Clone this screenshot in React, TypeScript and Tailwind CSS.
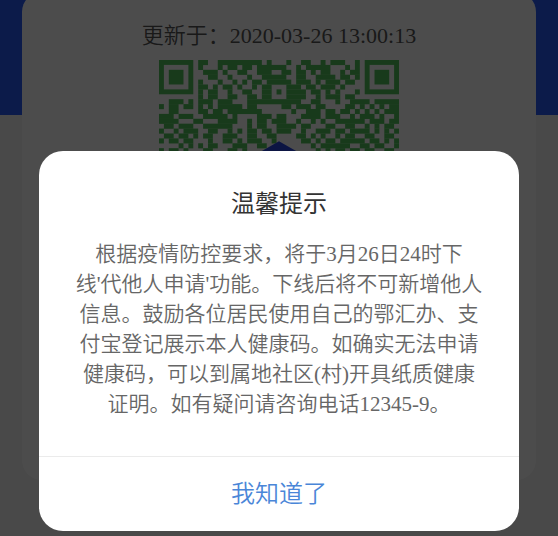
const TOP_ROWS = [
  "110011111111101000100110010111001",
  "100010110110111111001011111000101",
  "011101001100111001101101011001011",
  "001100100010011111001100111101101",
  "100010010101101111101110101110110",
  "110101101001011000111011011101000",
  "101100100110011010111101101010001",
];

const LOWER_ROWS = [
  "0000000010110011001101100011110010111011000000000",
  "0011101011101110001111111111100110001001111011111",
  "1011011010101111101100000110111011000011010101011",
  "0011000011011011111110000001001110110110101010111",
  "1110111001111101000011101100011110111001011101001",
  "1111000110001111001011011100100101001111110111011",
  "0110111001111110001011001111011000110011001010110",
  "1001011100110010101101101110010011101101111010101",
  "0110110101100111001100110000110101001011001100110",
  "1011011000100110101110010000011010110111110110101",
  "0000101010110001110011000000000101111110011011001",
  "1011010001100011010000000000000010101101101100110",
];

const GREEN = "#52c45c";

function Modules({ rows, left, top }: { rows: string[]; left: number; top: number }) {
  return (
    <>
      {rows.map((row, y) =>
        Array.from(row.matchAll(/1+/g), (run) => (
          <rect
            key={`${y}-${run.index}`}
            x={left + run.index}
            y={top + y}
            width={run[0].length}
            height={1.04}
            fill={GREEN}
          />
        )),
      )}
    </>
  );
}

function Finder({ x }: { x: number }) {
  return (
    <>
      <rect x={x + 0.5} y={0.5} width={6} height={6} fill="none" stroke={GREEN} />
      <rect x={x + 2} y={2} width={3} height={3} fill={GREEN} />
    </>
  );
}

function HealthCode() {
  return (
    <svg
      viewBox="0 0 49 49"
      className="mt-2 w-[240px] max-w-full"
      role="img"
      aria-label="健康码"
    >
      <Finder x={0} />
      <Finder x={42} />
      <Modules rows={TOP_ROWS} left={8} top={0} />
      <Modules rows={LOWER_ROWS} left={0} top={7} />
      <path d="M24.5 16.6 L30.5 20 V26 L24.5 29 L18.5 26 V20 Z" fill="#2a46e0" />
    </svg>
  );
}

export default function App() {
  return (
    <div className="relative min-h-screen overflow-hidden bg-[#f4f4f4] font-['Liberation_Serif','Noto_Sans_CJK_SC',serif]">
      <div className="grid bg-linear-to-b from-[#285cf8] from-[115px] to-transparent to-[115px] px-[22px]">
        <main className="-mt-2 flex h-[488px] flex-col items-center rounded-[20px] bg-white pt-7">
          <p className="text-[22px] leading-8 font-[350] text-[#555]">
            更新于：2020-03-26 13:00:13
          </p>
          <HealthCode />
        </main>
      </div>

      <div className="absolute inset-0 flex items-end bg-black/70 px-[39px] pb-[5px]">
        <section
          role="dialog"
          aria-modal="true"
          aria-labelledby="notice-title"
          className="w-full overflow-hidden rounded-3xl bg-white text-center"
        >
          <div className="px-9 py-[37px]">
            <h1 id="notice-title" className="text-[24px] leading-8 text-[#333]">
              温馨提示
            </h1>
            <p className="mt-[19px] text-[21px] leading-[30px] font-[350] text-[#666]">
              根据疫情防控要求，将于3月26日24时下线'代他人申请'功能。下线后将不可新增他人信息。鼓励各位居民使用自己的鄂汇办、支付宝登记展示本人健康码。如确实无法申请健康码，可以到属地社区(村)开具纸质健康证明。如有疑问请咨询电话12345-9。
            </p>
          </div>
          <button
            type="button"
            className="h-[75px] w-full border-t border-[#ebebeb] text-[24px] font-[350] text-[#4a86d8]"
          >
            我知道了
          </button>
        </section>
      </div>
    </div>
  );
}
